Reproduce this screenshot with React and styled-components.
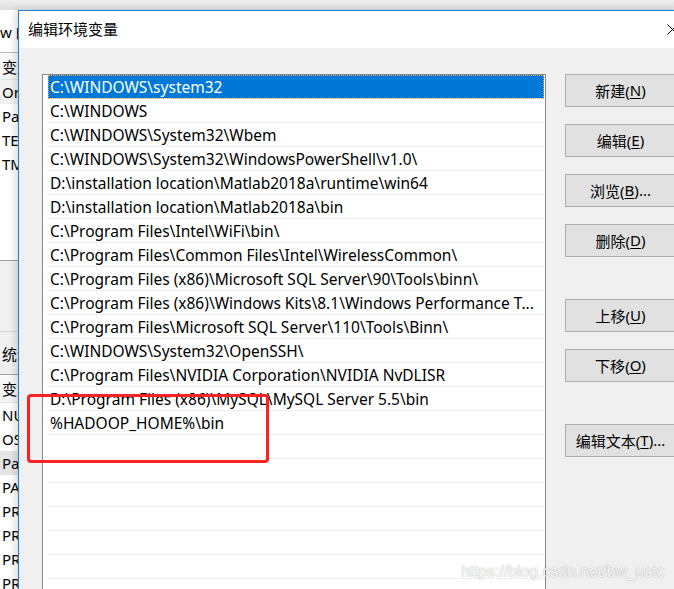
import React from 'react';
import styled, { createGlobalStyle } from 'styled-components';

const GlobalStyle = createGlobalStyle`
  html, body {
    margin: 0;
    padding: 0;
    background: #ffffff;
  }
  body {
    font-family: "Noto Sans", "Noto Sans CJK SC", sans-serif;
    color: #000;
  }
`;

const Page = styled.div`
  position: relative;
  width: 674px;
  height: 589px;
  overflow: hidden;
  display: flex;
  flex-direction: column;
  font-size: 15px;
`;

const TopStrip = styled.div`
  height: 10px;
  flex-shrink: 0;
  background: linear-gradient(#ededed, #dedede);
`;

const Main = styled.div`
  flex: 1;
  display: flex;
  min-height: 0;
`;

/* window behind the dialog, only its right edge shows */
const BackWindow = styled.div`
  width: 18px;
  flex-shrink: 0;
  overflow: hidden;
  display: flex;
  flex-direction: column;
  background: #ffffff;
  white-space: nowrap;
`;

const BackBlock = styled.div`
  height: ${(p) => p.$h}px;
  flex-shrink: 0;
  display: flex;
  align-items: center;
  padding-left: ${(p) => (p.$indent == null ? 2 : p.$indent)}px;
  background: ${(p) => p.$bg || 'transparent'};
  border-bottom: ${(p) => (p.$line ? `1px solid ${p.$line}` : 'none')};
  box-sizing: border-box;
`;

const Dialog = styled.div`
  width: 660px;
  flex-shrink: 0;
  display: flex;
  flex-direction: column;
  border-left: 1px solid #1883d7;
  border-top: 1px solid #1883d7;
  box-shadow: -3px 0 7px rgba(0, 0, 0, 0.14);
  position: relative;
`;

const TitleBar = styled.div`
  height: 37px;
  flex-shrink: 0;
  background: #ffffff;
  display: flex;
  align-items: center;
  justify-content: space-between;
  padding-left: 9px;
  padding-right: 1px;
`;

const Title = styled.span`
  font-family: "Noto Sans CJK SC", sans-serif;
  font-size: 15px;
  padding-bottom: 2px;
`;

const Body = styled.div`
  flex: 1;
  background: #f0f0f0;
  display: flex;
  gap: 19px;
  padding: 26px 0 0 23px;
`;

const ListBox = styled.div`
  width: 504px;
  height: 560px;
  flex-shrink: 0;
  box-sizing: border-box;
  border: 1px solid #828790;
  background: #ffffff;
  padding: 0 1px 0 5px;
`;

const Item = styled.div`
  height: 24px;
  box-sizing: border-box;
  border-bottom: 1px solid #f0f0f0;
  padding: 0 4px 0 2px;
  display: flex;
  align-items: center;
  white-space: nowrap;
  overflow: hidden;
  font-size: 15.5px;
  background: ${(p) => (p.$selected ? '#0078d7' : 'transparent')};
  color: ${(p) => (p.$selected ? '#ffffff' : '#000000')};
  outline: ${(p) => (p.$selected ? '1px dotted #f7a35c' : 'none')};
  outline-offset: -1px;
`;

const ButtonColumn = styled.div`
  width: 111px;
  flex-shrink: 0;
  display: flex;
  flex-direction: column;
  gap: 17px;
`;

const Button = styled.div`
  height: 33px;
  box-sizing: border-box;
  margin-top: ${(p) => (p.$spaced ? 25 : 0)}px;
  border: 1px solid #adadad;
  background: #e1e1e1;
  display: flex;
  align-items: center;
  justify-content: center;
  font-size: 15px;
  padding-bottom: 1px;

  u {
    text-decoration-thickness: 1px;
    text-underline-offset: 2px;
  }
`;

const Callout = styled.div`
  position: absolute;
  left: 27px;
  top: 394px;
  width: 242px;
  height: 69px;
  box-sizing: border-box;
  border: 3px solid #fa2222;
  border-radius: 4px;
`;

const Watermark = styled.div`
  position: absolute;
  left: 461px;
  top: 563px;
  font-family: "Liberation Sans", Arial, sans-serif;
  font-size: 16px;
  color: rgba(255, 255, 255, 0.85);
  text-shadow: 0 0 1.5px rgba(0, 0, 0, 0.35);
  letter-spacing: -0.1px;
`;

const paths = [
  'C:\\WINDOWS\\system32',
  'C:\\WINDOWS',
  'C:\\WINDOWS\\System32\\Wbem',
  'C:\\WINDOWS\\System32\\WindowsPowerShell\\v1.0\\',
  'D:\\installation location\\Matlab2018a\\runtime\\win64',
  'D:\\installation location\\Matlab2018a\\bin',
  'C:\\Program Files\\Intel\\WiFi\\bin\\',
  'C:\\Program Files\\Common Files\\Intel\\WirelessCommon\\',
  'C:\\Program Files (x86)\\Microsoft SQL Server\\90\\Tools\\binn\\',
  'C:\\Program Files (x86)\\Windows Kits\\8.1\\Windows Performance T...',
  'C:\\Program Files\\Microsoft SQL Server\\110\\Tools\\Binn\\',
  'C:\\WINDOWS\\System32\\OpenSSH\\',
  'C:\\Program Files\\NVIDIA Corporation\\NVIDIA NvDLISR',
  'D:\\Program Files (x86)\\MySQL\\MySQL Server 5.5\\bin',
  '%HADOOP_HOME%\\bin',
  '', '', '', '', '', '', '', '',
];

const buttons = [
  { label: '新建', key: 'N' },
  { label: '编辑', key: 'E' },
  { label: '浏览', key: 'B', dots: true },
  { label: '删除', key: 'D' },
  { label: '上移', key: 'U', spaced: true },
  { label: '下移', key: 'O' },
  { label: '编辑文本', key: 'T', dots: true, spaced: true },
];

const CloseIcon = () => (
  <svg width="11" height="11" viewBox="0 0 11 11">
    <path d="M0.5 0.5 L10.5 10.5 M10.5 0.5 L0.5 10.5" stroke="#000" strokeWidth="1" fill="none" />
  </svg>
);

const BackgroundWindow = () => (
  <BackWindow>
    <BackBlock $h={43} $indent={0} $line="#b9b9b9">w 的</BackBlock>
    <BackBlock $h={27} $bg="linear-gradient(#fafafa, #f3f3f3)" $line="#e5e5e5">变量</BackBlock>
    <BackBlock $h={24} $bg="#f2f2f2">Or</BackBlock>
    <BackBlock $h={24}>Path</BackBlock>
    <BackBlock $h={24}>TEMP</BackBlock>
    <BackBlock $h={24}>TMP</BackBlock>
    <BackBlock $h={85} $line="#a0a0a0" />
    <BackBlock $h={71} $bg="#f0f0f0" $line="#d6d6d6" />
    <BackBlock $h={43} $bg="#f0f0f0" $line="#a0a0a0">统计</BackBlock>
    <BackBlock $h={28} $bg="linear-gradient(#fafafa, #f3f3f3)" $line="#e5e5e5">变量</BackBlock>
    <BackBlock $h={24}>NUMBER</BackBlock>
    <BackBlock $h={24}>OS</BackBlock>
    <BackBlock $h={24} $bg="#e5e5e5">Path</BackBlock>
    <BackBlock $h={24}>PATHEXT</BackBlock>
    <BackBlock $h={24}>PROCESSOR</BackBlock>
    <BackBlock $h={24}>PROCESSOR</BackBlock>
    <BackBlock $h={24}>PROCESSOR</BackBlock>
    <BackBlock $h={24}>PROCESSOR</BackBlock>
  </BackWindow>
);

const App = () => {
  return (
    <Page>
      <GlobalStyle />
      <TopStrip />
      <Main>
        <BackgroundWindow />
        <Dialog>
          <TitleBar>
            <Title>编辑环境变量</Title>
            <CloseIcon />
          </TitleBar>
          <Body>
            <ListBox>
              {paths.map((p, i) => (
                <Item key={i} $selected={i === 0}>
                  {p}
                </Item>
              ))}
            </ListBox>
            <ButtonColumn>
              {buttons.map((b) => (
                <Button key={b.key} $spaced={b.spaced}>
                  {b.label}(<u>{b.key}</u>){b.dots ? '...' : ''}
                </Button>
              ))}
            </ButtonColumn>
          </Body>
        </Dialog>
      </Main>
      <Callout />
      <Watermark>https://blog.csdn.net/bw_ustc</Watermark>
    </Page>
  );
};

export default App;
